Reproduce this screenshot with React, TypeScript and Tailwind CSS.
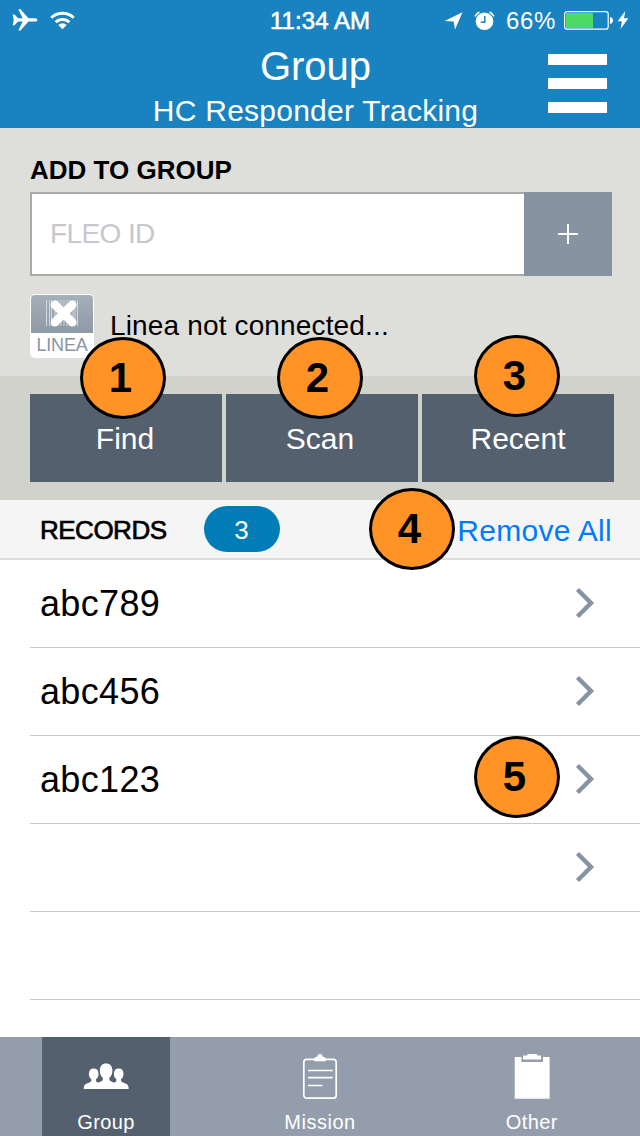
import React from "react";

const records = ["abc789", "abc456", "abc123", ""];

const markers = [
  { label: "1", place: "left-[80px] top-[337px]" },
  { label: "2", place: "left-[277px] top-[337px]" },
  { label: "3", place: "left-[474px] top-[335px]" },
  { label: "4", place: "left-[369px] top-[488px]" },
  { label: "5", place: "left-[474px] top-[736px]" },
];

function StatusBar() {
  return (
    <div className="flex h-10 items-center text-[24px] leading-[40px]">
      <svg className="ml-[12px] h-[24px] w-[26px]" viewBox="0 0 26 24" fill="#fff">
        <path d="M.7 6.600h1.800l3.600 3.600h4.600L6.300 1.200h2.200l8 9h6.300c1.700 0 2.500.9 2.500 1.700s-.8 1.700-2.500 1.700h-6.300l-8 9H6.300l4.400-9H6.100l-3.600 3.600H.7l1-5.300z" />
      </svg>
      <svg className="ml-[11px] h-[20px] w-[27px]" viewBox="0 0 27 20" fill="none" stroke="#fff" strokeWidth="3">
        <path d="M2.300 7.800a15.800 15.800 0 0 1 22.400 0" />
        <path d="M6.700 12.200a9.700 9.700 0 0 1 13.600 0" />
        <path d="M13.500 19.300 9.300 15a6 6 0 0 1 8.400 0z" fill="#fff" stroke="none" />
      </svg>
      <span className="ml-[194px] w-[112px] whitespace-nowrap pt-[2px] tracking-[0.05px] [-webkit-text-stroke:0.6px_white]">11:34 AM</span>
      <svg className="ml-[62px] mt-px h-[18px] w-[19px]" viewBox="0 0 19 18" fill="#fff">
        <path d="M18.500.3 11 17.400l-1.400-8L.5 9.100z" />
      </svg>
      <svg className="ml-[11px] mt-px h-[20px] w-[21px]" viewBox="0 0 21 20">
        <circle cx="10.500" cy="10.300" r="8.800" fill="#fff" />
        <path d="M1 5.400A11 11 0 0 1 5.400 1M20 5.400A11 11 0 0 0 15.600 1" fill="none" stroke="#fff" strokeWidth="1.600" />
        <path d="M10.800 5v6.300H6.800" fill="none" stroke="#1983c2" strokeWidth="1.500" />
      </svg>
      <span className="ml-[11px] w-[53px] pt-[2px] tracking-[0.6px]">66%</span>
      <svg className="ml-[5px] h-[20px] w-[49px]" viewBox="0 0 49 20">
        <rect x=".600" y="1.600" width="43.600" height="17.600" rx="2.500" fill="none" stroke="#fff" strokeWidth="1.200" />
        <rect x="2" y="3" width="27" height="15" fill="#4cd964" />
        <path d="M46 7q3 .8 3 3.400T46 14z" fill="#fff" />
      </svg>
      <svg className="ml-[4px] h-[20px] w-[12px]" viewBox="0 0 12 20" fill="#fff">
        <path d="M8.300 1 .7 11.300h4.200L3.500 19 11.400 8.200H7z" />
      </svg>
    </div>
  );
}

function Header() {
  return (
    <header className="h-32 bg-[#1983c2] text-white">
      <StatusBar />
      <div className="flex h-[88px]">
        <div className="w-[92px]" />
        <div className="flex-1 pr-[9px] text-center">
          <h1 className="h-[52px] text-[40px] leading-[53px]">Group</h1>
          <p className="whitespace-nowrap text-[30px] leading-[37px] tracking-[0.25px]">HC Responder Tracking</p>
        </div>
        <div className="flex w-[92px] flex-col gap-[13px] pt-[14px]">
          <span className="h-[11px] w-[59px] bg-white" />
          <span className="h-[11px] w-[59px] bg-white" />
          <span className="h-[11px] w-[59px] bg-white" />
        </div>
      </div>
    </header>
  );
}

function LineaIcon() {
  return (
    <div className="h-16 w-16 overflow-hidden rounded-[5px] bg-white p-px">
      <div className="flex h-[38px] justify-center rounded-t-[4px] bg-linear-to-b from-[#a6b0ba] to-[#8e99a6]">
        <svg className="mt-[4px] h-[30px] w-[34px]" viewBox="0 0 34 30">
          <path
            d="M1.500 1v26M4.500 1v26M6.500 1v26M10 1v26M13 1v26M16 1v26M19 1v26M22 1v26M25 1v26M28 1v26M30 1v26M32.500 1v26"
            stroke="#d3d8dd"
            strokeWidth="1"
          />
          <path
            d="M9.900 5.800 27.300 23.200M27.300 5.800 9.900 23.200"
            stroke="#fff"
            strokeWidth="8.600"
            strokeLinecap="round"
          />
        </svg>
      </div>
      <div className="text-center text-[18px] leading-[24px] tracking-[-0.2px] text-[#8994a3]">LINEA</div>
    </div>
  );
}

function AddToGroup() {
  return (
    <section className="h-[248px] bg-[#dededb] pl-[30px]">
      <h2 className="h-16 pt-[26px] text-[26px] font-bold leading-[32px]">ADD TO GROUP</h2>
      <div className="flex h-[84px] w-[582px]">
        <div className="flex-1 border-2 border-r-0 border-[#a9a9a9] bg-white pl-[18px] text-[28px] leading-[79px] tracking-[-0.6px] text-[#c7c7cd]">
          FLEO ID
        </div>
        <button className="flex w-[88px] items-center justify-center bg-[#8893a2]">
          <svg className="h-[20px] w-[20px]" viewBox="0 0 20 20" stroke="#fff" strokeWidth="2">
            <path d="M10 0v20M0 10h20" />
          </svg>
        </button>
      </div>
      <div className="mt-[18px] flex gap-[16px]">
        <LineaIcon />
        <span className="text-[28px] leading-[63px] tracking-[0.15px]">Linea not connected...</span>
      </div>
    </section>
  );
}

function Actions() {
  return (
    <section className="flex h-[124px] gap-1 bg-[#d1d2cc] pl-[30px] pt-[18px] text-[30px] leading-[90px] text-white">
      <button className="h-[88px] w-[192px] bg-[#55606e] pr-[2px]">Find</button>
      <button className="h-[88px] w-[192px] bg-[#55606e] pr-[4px]">Scan</button>
      <button className="h-[88px] w-[192px] bg-[#55606e]">Recent</button>
    </section>
  );
}

function Records() {
  return (
    <section className="h-[537px]">
      <div className="flex h-[60px] items-center border-b-2 border-[#dcddd9] bg-[#f5f5f5] pl-[40px] pr-[28px]">
        <h2 className="w-[164px] pt-px text-[26px] leading-[60px] tracking-[-0.5px] [-webkit-text-stroke:0.7px_black]">RECORDS</h2>
        <span className="h-[46px] w-[76px] rounded-full bg-[#007db7] pr-[1px] text-center text-[26px] leading-[48px] text-white">3</span>
        <a className="ml-auto pt-[3px] text-[30px] leading-[57px] tracking-[0.3px] text-[#007aff]">Remove All</a>
      </div>
      {records.map((name, i) => (
        <div key={i} className="ml-[30px] flex h-[88px] items-center justify-between border-b border-[#c8c7cc] pl-[10px] pr-[45px]">
          <span className="text-[36px] leading-[88px] tracking-[0.35px]">{name}</span>
          <svg className="mb-[2px] h-[32px] w-[20px]" viewBox="0 0 20 32" fill="none" stroke="#8893a2" strokeWidth="4.400">
            <path d="M2.500 2.500 16 16 2.500 29.500" />
          </svg>
        </div>
      ))}
      <div className="ml-[30px] h-[88px] border-b border-[#c8c7cc]" />
    </section>
  );
}

function GroupIcon() {
  return (
    <svg className="h-[50px] w-[46px]" viewBox="0 0 46 50" fill="#fff">
      <path d="M.8 39v-1.200c0-2.600 1.400-3.900 4.400-4.900 2.600-.9 3.200-1.400 3.200-3.700-1.700-1.400-2.500-3.200-2.500-5.300 0-3.500 1.800-5.300 4.800-5.300s4.800 1.800 4.800 5.300c0 2.100-.8 3.900-2.500 5.300 0 2.300.3 2.800 3 3.700l3 6.100z" />
      <path d="M45.600 39v-1.200c0-2.600-1.400-3.900-4.400-4.900-2.600-.9-3.200-1.400-3.200-3.700 1.700-1.400 2.500-3.200 2.500-5.300 0-3.500-1.800-5.300-4.800-5.300s-4.800 1.800-4.800 5.300c0 2.100.8 3.900 2.500 5.300 0 2.300-.3 2.800-3 3.700l-3 6.100z" />
      <path d="M11.200 39c0-4.300 1.100-5.500 5-6.800 2.900-1 3.700-1.600 3.700-4.200-2.100-1.800-3.100-4.300-3.100-7.200 0-4.700 2.200-7.300 6.300-7.300s6.300 2.600 6.300 7.300c0 2.900-1 5.400-3.100 7.200 0 2.600.8 3.200 3.700 4.200 3.900 1.300 5 2.500 5 6.800z" />
    </svg>
  );
}

function MissionIcon() {
  return (
    <svg className="h-[50px] w-[36px]" viewBox="0 0 36 50" fill="none" stroke="#fff" strokeWidth="1.700">
      <rect x="1.800" y="9.300" width="32.400" height="38.900" rx="3" />
      <path d="M6 20.500h24.700M6 27.700h24.700M6 35.500h14.500" />
      <path d="M12.300 8.500q0-1.400 2-1.500c1.300-.1 1-3 3.700-3s2.400 2.900 3.700 3q2 .1 2 1.500v2.800H12.300z" fill="#fff" stroke="none" />
    </svg>
  );
}

function OtherIcon() {
  return (
    <svg className="h-[50px] w-[36px]" viewBox="0 0 36 50" fill="#fff">
      <path d="M.7 7h34.900v41.700H.7z" />
      <path d="M7.500 7h21.500v5H7.500z" fill="#949dab" />
      <path d="M9 5.500h4.500V4H23v1.500h4v4H9z" />
    </svg>
  );
}

function TabBar() {
  return (
    <nav className="grid h-[99px] grid-cols-3 bg-[#949dab] text-center text-[20px] leading-[24px] text-white">
      <div className="ml-[42px] flex w-[128px] flex-col items-center bg-[#55606e] pt-[13px]">
        <GroupIcon />
        <span className="mt-[10px] tracking-[0.4px]">Group</span>
      </div>
      <div className="flex flex-col items-center pt-[13px]">
        <MissionIcon />
        <span className="mt-[10px] tracking-[0.5px]">Mission</span>
      </div>
      <div className="flex flex-col items-center pr-[3px] pt-[13px]">
        <OtherIcon />
        <span className="mt-[10px] tracking-[0.4px]">Other</span>
      </div>
    </nav>
  );
}

export default function App() {
  return (
    <main className="relative h-[1136px] w-[640px] overflow-hidden bg-white font-['Liberation_Sans',Arial,sans-serif] text-black">
      <Header />
      <AddToGroup />
      <Actions />
      <Records />
      <TabBar />
      {markers.map(({ label, place }) => (
        <div
          key={label}
          className={`absolute ${place} h-[82px] w-[86px] rounded-[50%] border-[3px] border-black bg-[#ff9326] pr-[5px] text-center text-[42px] font-bold leading-[76px]`}
        >
          {label}
        </div>
      ))}
    </main>
  );
}
